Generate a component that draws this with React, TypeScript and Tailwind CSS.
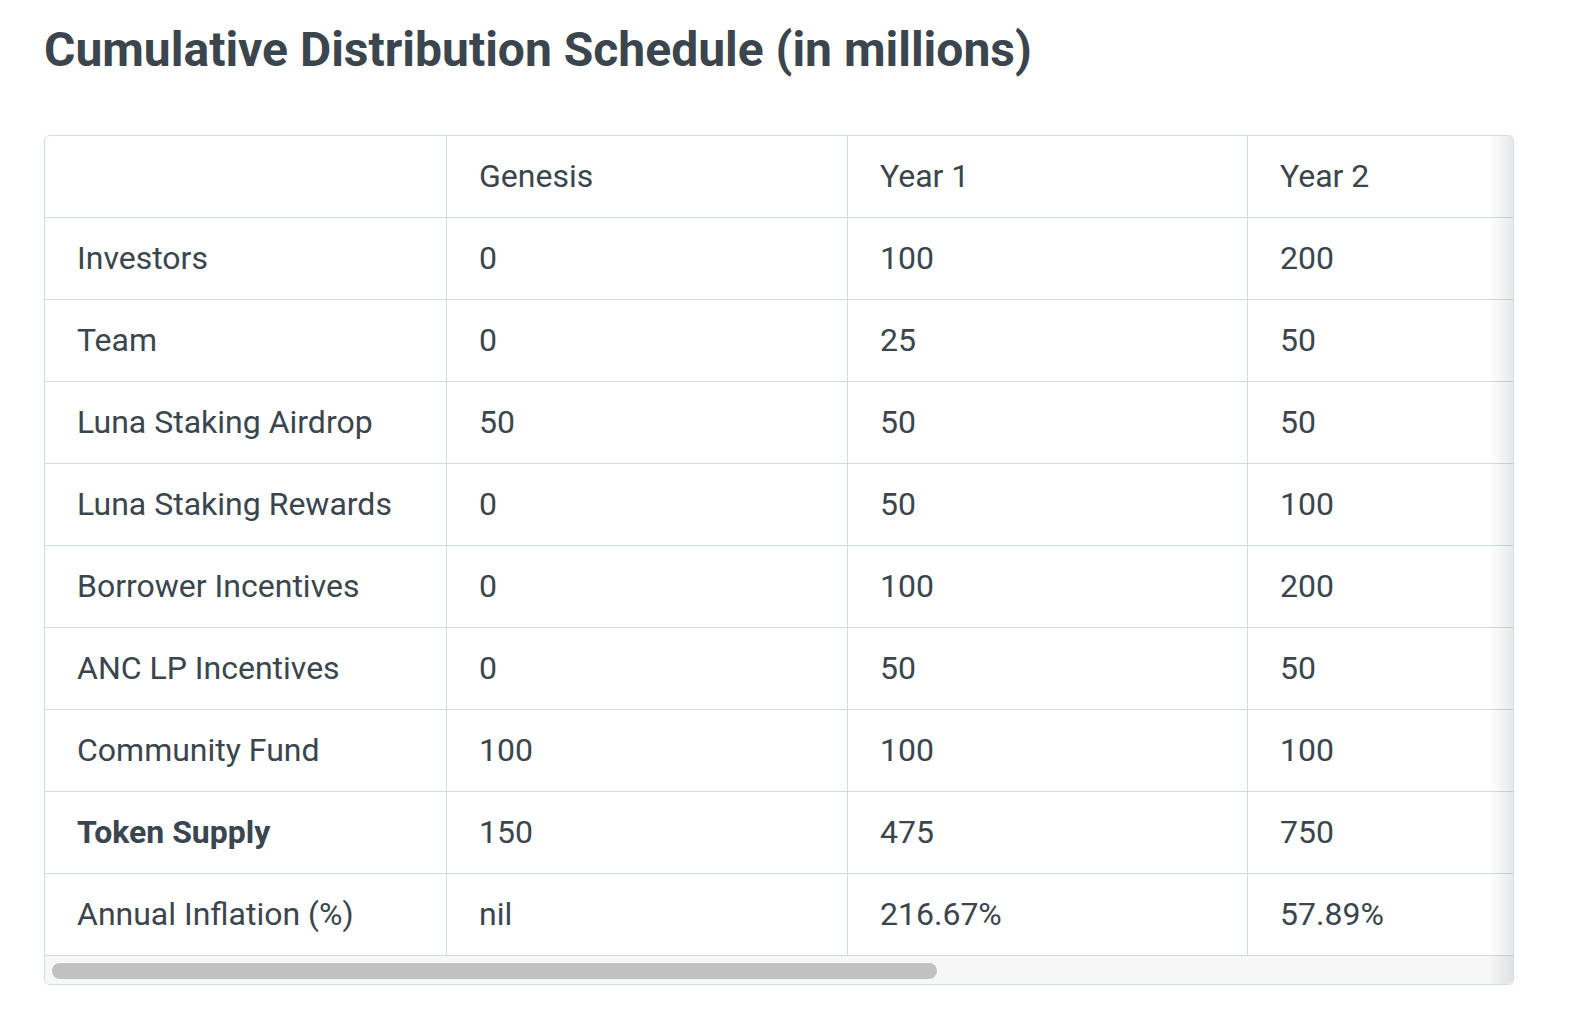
import React from "react";

type Row = { label: string; bold?: boolean; values: string[] };

const headers = ["", "Genesis", "Year 1", "Year 2"];

const rows: Row[] = [
  { label: "Investors", values: ["0", "100", "200"] },
  { label: "Team", values: ["0", "25", "50"] },
  { label: "Luna Staking Airdrop", values: ["50", "50", "50"] },
  { label: "Luna Staking Rewards", values: ["0", "50", "100"] },
  { label: "Borrower Incentives", values: ["0", "100", "200"] },
  { label: "ANC LP Incentives", values: ["0", "50", "50"] },
  { label: "Community Fund", values: ["100", "100", "100"] },
  { label: "Token Supply", bold: true, values: ["150", "475", "750"] },
  { label: "Annual Inflation (%)", values: ["nil", "216.67%", "57.89%"] },
];

const widths = ["w-[402px]", "w-[401px]", "w-[400px]", "w-[401px]"];

function Cell({ children, col, bold }: { children?: React.ReactNode; col: number; bold?: boolean }) {
  return (
    <div
      className={`${widths[col]} shrink-0 h-full flex items-center pl-[32px] pb-[1px] border-r border-[#d3dce4] ${
        bold ? "font-bold" : "font-normal"
      }`}
    >
      {children}
    </div>
  );
}

export default function App() {
  return (
    <div className="min-h-[1026px] bg-white text-[#3b454e] [font-family:Roboto,sans-serif] pl-[44px] pt-[22px]">
      <h2 className="text-[48px] leading-[56px] font-bold">
        Cumulative Distribution Schedule (in millions)
      </h2>

      <div className="mt-[57px] w-[1470px] border border-[#d3dce4] rounded-[6px] overflow-hidden relative">
        <div className="overflow-hidden">
          <div className="w-max text-[32px] leading-[40px]">
            <div className="flex h-[82px] border-b border-[#d3dce4]">
              {headers.map((h, i) => (
                <Cell key={i} col={i}>
                  {h}
                </Cell>
              ))}
            </div>
            {rows.map((r) => (
              <div key={r.label} className="flex h-[82px] border-b border-[#d3dce4]">
                <Cell col={0} bold={r.bold}>
                  {r.label}
                </Cell>
                {r.values.map((v, i) => (
                  <Cell key={i} col={i + 1}>
                    {v}
                  </Cell>
                ))}
              </div>
            ))}
          </div>
        </div>
        <div className="h-[28px] bg-[#f7f7f7] pt-[7px] pl-[7px]">
          <div className="h-[16px] w-[885px] rounded-full bg-[#c1c1c1]" />
        </div>
        <div className="absolute top-0 right-0 bottom-0 w-[24px] bg-gradient-to-r from-transparent to-[rgba(0,0,0,0.09)]" />
      </div>
    </div>
  );
}
